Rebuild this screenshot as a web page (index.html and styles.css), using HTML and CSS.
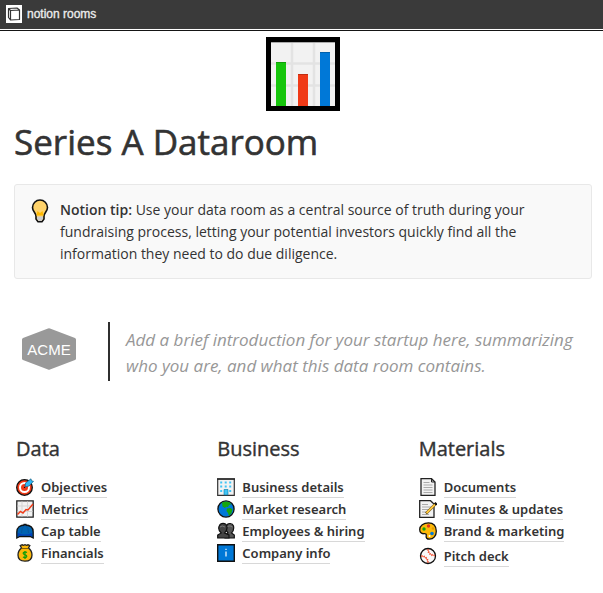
FILE: index.html
```html
<!DOCTYPE html>
<html lang="en">
<head>
<meta charset="utf-8">
<title>Series A Dataroom</title>
<meta name="viewport" content="width=device-width, initial-scale=1">
<link rel="stylesheet" href="styles.css">
</head>
<body>
<header class="topbar">
  <svg class="brand-mark" viewBox="0 0 16 18" aria-hidden="true">
    <path fill="#fff" d="M0 0h16v18H0z"/>
    <path fill="#fff" stroke="#333" stroke-width="1.2" stroke-linejoin="round" d="M2.5 3.5 11 3l2.500 2v9.500l-9 .5-2-2.500zM2.500 3.500l2 2 9-.5M4.500 5.500V15"/>
  </svg>
  <span class="brand-name">notion rooms</span>
</header>
<main class="page">
  <svg class="cover-icon" viewBox="0 0 74 74" aria-hidden="true">
    <path d="M0 0h74v74H0z"/>
    <path fill="#f2f2f2" d="M5 5h64v64H5z"/>
    <path stroke="#e3e3e3" stroke-width="2.500" d="M26 5v64M48 5v64M5 26.500h64M5 48.500h64"/>
    <path stroke="#aaa" d="M5 5.500h64"/>
    <path fill="#16c60c" d="M10 25h10v44H10z"/>
    <path fill="#f03a17" d="M32 37h10v32H32z"/>
    <path fill="#0078d7" d="M54 15h10v54H54z"/>
    <path stroke="#000" stroke-opacity=".2" d="M10 25.500h10M32 37.500h10M54 15.500h10"/>
  </svg>
  <h1 class="title">Series A Dataroom</h1>

  <aside class="callout">
    <svg class="bulb" viewBox="0 0 18 24" aria-hidden="true">
      <path fill="#ffd36b" stroke="#111" stroke-width="1.600" d="M9 1a7.500 7.500 0 0 0-7.500 7.500c0 4 3.500 5 3.500 9V20l2 2.800h4l2-2.800v-2.500c0-4 3.500-5 3.500-9A7.500 7.500 0 0 0 9 1z"/>
      <path fill="#ffb900" d="M6.500 12 9 14l2.500-2 1 4.500h-7z"/>
      <path fill="#ccc" d="M6 17.500h6v2L10.500 22h-3L6 19.500z"/>
    </svg>
    <p class="callout-text"><strong>Notion tip:</strong> Use your data room as a central source of truth during your fundraising process, letting your potential investors quickly find all the information they need to do due diligence.</p>
  </aside>

  <section class="intro">
    <svg class="acme" viewBox="0 0 54 42" role="img" aria-label="ACME">
      <path fill="#999" d="M26 .5q1-.5 2 0l25 9.500q1 .5 1 1.500v19q0 1-1 1.500l-25 9.500q-1 .5-2 0L1 32q-1-.5-1-1.500v-19Q0 10.500 1 10z"/>
      <text class="acme-word" x="27" y="27" text-anchor="middle">ACME</text>
    </svg>
    <blockquote class="quote">Add a brief introduction for your startup here, summarizing who you are, and what this data room contains.</blockquote>
  </section>

  <div class="columns">
    <section class="column">
      <h2>Data</h2>
      <ul>
        <li><svg viewBox="0 0 18 18" aria-hidden="true"><circle cx="8.500" cy="9.500" r="7.800" fill="#f03a17" stroke="#111" stroke-width="1.300"/><circle cx="8.500" cy="9.500" r="4.500" fill="none" stroke="#fff" stroke-width="2"/><circle cx="8.500" cy="9.500" r="1.500" fill="#f03a17"/><path stroke="#111" stroke-width="1" d="m8 10 4-4"/><path fill="#31b8f4" stroke="#145c80" stroke-width=".7" d="m9 9 .5-4L15 .8l.5 2 2 .5L13 8z"/></svg><a href="#">Objectives</a></li>
        <li><svg viewBox="0 0 18 18" aria-hidden="true"><path fill="#f2f2f2" stroke="#222" stroke-width="1.300" d="M.8.8h16.400v16.400H.8z"/><path fill="none" stroke="#d5d5d5" d="M6 1.500v15M11.500 1.500v15M1.500 6h15M1.500 11.500h15"/><path fill="none" stroke="#f03a17" stroke-width="1.400" d="m1.500 14.500 3-3 2.500 1.500 3-3.500 2 .5 5-6"/></svg><a href="#">Metrics</a></li>
        <li><svg viewBox="0 0 18 18" aria-hidden="true"><path fill="#0063b1" stroke="#111" stroke-width="1.300" d="M.8 16V10C.8 5.500 4 3 9 3s8.200 2.500 8.200 7v6l-3-1.500H3.800z"/><path fill="#003fbd" d="M2 11q7 3 14 0v3.500l-2-1H4l-2 1z"/><path fill="none" stroke="#0a4e90" stroke-width=".7" d="M5.500 11Q5 6 9 3q4 3 3.500 8"/><path stroke="#111" stroke-width="1.500" d="M7.500 2.500h3"/></svg><a href="#">Cap table</a></li>
        <li><svg viewBox="0 0 18 18" aria-hidden="true"><path fill="#fcb80a" stroke="#222" stroke-width="1.300" d="m5.500 4-1.300-2.500 2-.7 1.300.5L9 .7l1.500.6 1.500-.5 1.800.7L12.500 4C15 6 16 8.500 16 11c0 4-2 6.200-7 6.200S2 15 2 11c0-2.500 1-5 3.500-7z"/><path stroke="#80600b" d="M5.800 4.500h6.400"/><path fill="none" stroke="#109d0b" stroke-width="1.200" d="M11 8.500C9 7.500 7 8 7.200 9.500c.2 1.300 3.600 1 3.600 2.700 0 1.500-2.300 1.800-3.800.8M9 7v8"/></svg><a href="#">Financials</a></li>
      </ul>
    </section>
    <section class="column">
      <h2>Business</h2>
      <ul>
        <li><svg viewBox="0 0 18 18" aria-hidden="true"><path fill="#f2f2f2" stroke="#333" stroke-width="1.200" d="M.7 1h16.600v16.300H.7z"/><path stroke="#222" stroke-width="1.500" d="M0 1h18"/><path stroke="#40c4f5" stroke-width="2" stroke-dasharray="2 2.500" d="M3.200 4.500h12M3.200 8.500h12M3.200 13h12"/><path fill="#40c4f5" stroke="#0078a8" stroke-width=".6" d="M7 11.500h4v5.300H7z"/></svg><a href="#">Business details</a></li>
        <li><svg viewBox="0 0 18 18" aria-hidden="true"><circle cx="9" cy="9" r="8.100" fill="#0078d7" stroke="#111" stroke-width="1.300"/><path fill="#16a60c" d="M5 2.500 9 1.500l4 1 1 2-2 .5-1 2-2-.2L8 8 5.500 6.500zM10 8.500l3.500-.5 2 1.500-1 3.500-2.500 3-1-3-1.500-2z"/></svg><a href="#">Market research</a></li>
        <li><svg viewBox="0 0 18 18" aria-hidden="true"><path fill="#555" stroke="#111" stroke-width="1.200" d="M8 16v-3l3-2C9 9 8.500 6 9.500 3.500c1.500-3 6-2.500 7 .5.600 3-.3 5.500-2 7l2.800 2V16z"/><path fill="#444" stroke="#111" stroke-width="1.200" d="M.7 16v-3l3.500-2C2 9 1.300 6 2.200 4c1.300-3.500 6.500-3.500 7.600 0 .6 2.500 0 5-2.200 7l4.400 2v3z"/><path fill="none" stroke="#888" stroke-width=".8" d="M3 5q2-2 5 0M10.500 4.500q2.500-1.500 5 .5"/></svg><a href="#">Employees &amp; hiring</a></li>
        <li><svg viewBox="0 0 18 18" aria-hidden="true"><path fill="#0078d7" stroke="#111" stroke-width="1.400" d="M.7.7h16.600v16.600H.7z"/><path stroke="#fff" stroke-width="1.200" d="M9 7.500v5M9 4.800V6"/></svg><a href="#">Company info</a></li>
      </ul>
    </section>
    <section class="column">
      <h2>Materials</h2>
      <ul>
        <li><svg viewBox="0 0 18 18" aria-hidden="true"><path fill="#f2f2f2" stroke="#222" stroke-width="1.300" d="M2 .7h10.500L16 4v13.300H2z"/><path fill="none" stroke="#222" d="M12.500 1v3H16"/><path stroke="#aaa" d="M4.500 4.500h6M4.500 7h9M4.500 9.500h9M4.500 12h9M4.500 14.500h9"/></svg><a href="#">Documents</a></li>
        <li><svg viewBox="0 0 18 18" aria-hidden="true"><path fill="#f2f2f2" stroke="#222" stroke-width="1.300" d="M.7.7h10.800L15 4v13.300H.7z"/><path stroke="#aaa" d="M3 4.500h6M3 7h9M3 9.500h7M3 12h5M3 14.500h7"/><path stroke="#5d4816" stroke-width="2.600" d="m7 13.500 10-10"/><path stroke="#ffc83d" stroke-width="1.800" d="m7.500 13 8.500-8.500"/><path stroke="#111" stroke-width="2.600" d="m16 4.500 1.500-1.500"/></svg><a href="#">Minutes &amp; updates</a></li>
        <li><svg viewBox="0 0 18 18" aria-hidden="true"><path fill="#fcb80a" stroke="#111" stroke-width="1.300" d="M9.500.8c-5 0-8.800 3-8.800 6.700 0 3 2 4.500 4 4.200 2-.3 3 .3 2.500 2-.5 2 .8 3.500 3.300 3.500 4 0 6.800-3.500 6.800-8C17.300 4 14.500.8 9.500.8z"/><circle cx="5" cy="7" r="1.700" fill="#16a60c"/><circle cx="9.500" cy="4" r="1.700" fill="#e23820"/><circle cx="13" cy="11.500" r="1.800" fill="#0078d7"/><circle cx="10.500" cy="14" r="1" fill="#fff"/><circle cx="14" cy="6.500" r="1.300" fill="#e39a00"/></svg><a href="#">Brand &amp; marketing</a></li>
        <li class="spaced"><svg viewBox="0 0 18 18" aria-hidden="true"><circle cx="9" cy="9" r="7.500" fill="#f8f8f8" stroke="#111" stroke-width="1.300"/><path fill="none" stroke="#f03a17" stroke-width=".7" d="M9 2.500q.5 5.500 6.500 6M2.500 9q6 .5 6.500 6.500"/><path fill="none" stroke="#f03a17" stroke-width="2.200" stroke-dasharray=".7 1.600" d="M9 2.500q.5 5.500 6.500 6M2.500 9q6 .5 6.500 6.500"/></svg><a href="#">Pitch deck</a></li>
      </ul>
    </section>
  </div>
</main>
</body>
</html>
```
FILE: styles.css
```css
* {
  box-sizing: border-box;
}

body {
  margin: 0;
  background: #fff;
  color: #333;
  font-family: "Open Sans", "Noto Sans", sans-serif;
  font-size: 14px;
}

h1, h2, p, ul, blockquote {
  margin: 0;
  padding: 0;
}

.topbar {
  display: flex;
  align-items: center;
  gap: 5px;
  height: 29px;
  padding: 0 6px 1px;
  background: #3a3a3a;
  color: #eee;
}

.topbar + .page {
  margin-top: 1px;
  border-top: 1px solid #151515;
}

.brand-mark {
  width: 16px;
  height: 18px;
}

.brand-name {
  font: 12px/18px "Liberation Sans", sans-serif;
  -webkit-text-stroke: 0.3px #eee;
}

.page {
  padding: 6px 11px 24px 14px;
}

.cover-icon {
  display: block;
  width: 74px;
  height: 74px;
  margin: 0 auto;
}

.title {
  padding-top: 7px;
  font-size: 35px;
  font-weight: 400;
  line-height: 48px;
  -webkit-text-stroke: 0.6px #333;
}

.callout {
  display: flex;
  gap: 11px;
  margin-top: 18px;
  padding: 14px 17px 13px 16px;
  border: 1px solid #e8e8e8;
  border-radius: 3px;
  background: #f9f9f9;
}

.bulb {
  flex: none;
  width: 18px;
  height: 24px;
}

.callout-text {
  max-width: 480px;
  line-height: 22px;
}

.callout-text strong {
  font-weight: 600;
}

.intro {
  display: flex;
  align-items: flex-start;
  gap: 32px;
  margin-top: 43px;
  padding-left: 8px;
}

.acme {
  flex: none;
  width: 54px;
  height: 42px;
  margin-top: 6px;
}

.acme-word {
  fill: #fff;
  font: 15px "Liberation Sans", sans-serif;
}

.quote {
  padding: 5px 0 2px 16px;
  border-left: 2px solid #2f2f2f;
  color: #979797;
  font-size: 17px;
  font-style: italic;
  line-height: 26px;
}

.columns {
  display: grid;
  grid-template-columns: repeat(3, 1fr);
  gap: 28px;
  margin-top: 52px;
  padding-left: 2px;
}

.column h2 {
  font-size: 20px;
  font-weight: 400;
  line-height: 32px;
  -webkit-text-stroke: 0.4px #333;
}

.column ul {
  margin-top: 11px;
  list-style: none;
}

.column li {
  display: flex;
  align-items: center;
  gap: 7px;
  height: 22px;
  white-space: nowrap;
}

.column li svg {
  flex: none;
  width: 18px;
  height: 18px;
}

.column li a {
  border-bottom: 1px solid #d8d8d8;
  color: #333;
  font-family: "Noto Sans", "Open Sans", sans-serif;
  font-size: 13px;
  font-weight: 600;
  line-height: 20px;
  text-decoration: none;
}

.column .spaced {
  margin-top: 3px;
}
```
